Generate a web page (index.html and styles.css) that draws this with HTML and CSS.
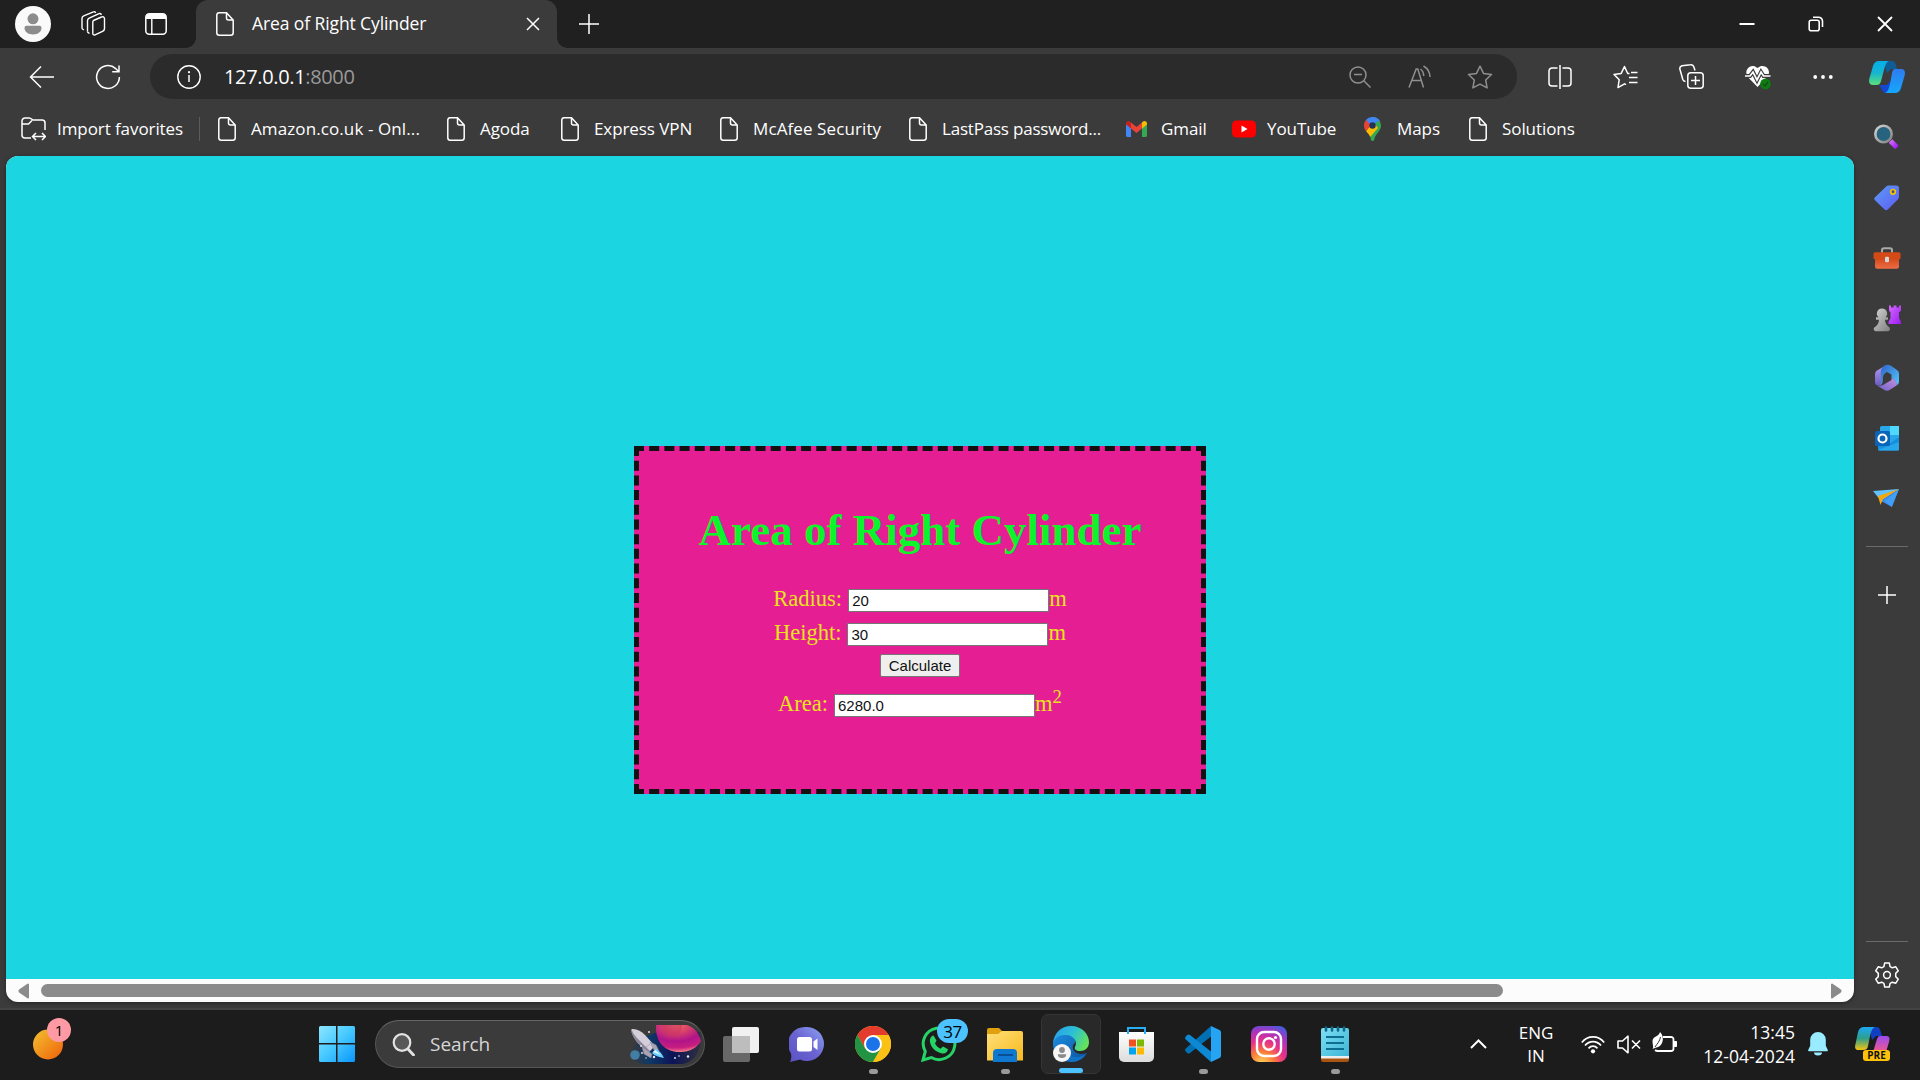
FILE: index.html
```html
<!DOCTYPE html>
<html lang="en">
<head>
<meta charset="utf-8">
<title>Area of Right Cylinder</title>
<link rel="stylesheet" href="styles.css">
</head>
<body>
<svg class="defs" aria-hidden="true">
  <defs>
    <symbol id="doc" viewBox="0 0 18 24"><path d="M3 .8h7.5L17.2 8v12.700a2.500 2.500 0 0 1-2.500 2.500H3.300a2.500 2.500 0 0 1-2.500-2.500V3.300A2.500 2.500 0 0 1 3 .8zM10.500 1v5a2 2 0 0 0 2 2h4.500" fill="none" stroke="#fff" stroke-width="1.500"/></symbol>
    <symbol id="plus" viewBox="0 0 22 22"><path d="M11 1v20M1 11h20" stroke="#fff" stroke-width="1.500"/></symbol>
    <linearGradient id="sun" x1="0" y1="0" x2="1" y2="1"><stop offset="0" stop-color="#f2c230"/><stop offset="1" stop-color="#f0600a"/></linearGradient>
    <linearGradient id="win" x1="0" y1="0" x2="1" y2="1"><stop offset="0" stop-color="#8ee5ff"/><stop offset=".5" stop-color="#45c8ff"/><stop offset="1" stop-color="#0a95fb"/></linearGradient>
    <linearGradient id="cpA" x1="0" y1="0" x2="0" y2="1"><stop offset="0" stop-color="#05aee8"/><stop offset=".5" stop-color="#16b5cf"/><stop offset="1" stop-color="#5ce07a"/></linearGradient>
    <linearGradient id="cpB" x1="0" y1="0" x2="0" y2="1"><stop offset="0" stop-color="#2f7bf0"/><stop offset="1" stop-color="#14a8fb"/></linearGradient>
    <linearGradient id="preA" x1="0" y1="0" x2="0" y2="1"><stop offset="0" stop-color="#1ba8f5"/><stop offset=".5" stop-color="#2f9f8a"/><stop offset="1" stop-color="#f5c413"/></linearGradient>
    <linearGradient id="preB" x1="0" y1="0" x2="0" y2="1"><stop offset="0" stop-color="#9a4cf0"/><stop offset="1" stop-color="#f2588a"/></linearGradient>
    <linearGradient id="violet" x1="0" y1="0" x2="1" y2="1"><stop offset="0" stop-color="#d76bff"/><stop offset="1" stop-color="#9a1cf2"/></linearGradient>
    <linearGradient id="silver" x1="0" y1="0" x2="1" y2="1"><stop offset="0" stop-color="#d4d4d4"/><stop offset="1" stop-color="#808080"/></linearGradient>
    <linearGradient id="tagG" x1="0" y1="0" x2="1" y2="1"><stop offset="0" stop-color="#5a9cf8"/><stop offset="1" stop-color="#5f5cf0"/></linearGradient>
    <linearGradient id="boxG" x1="0" y1="0" x2="0" y2="1"><stop offset="0" stop-color="#c83c0d"/><stop offset="1" stop-color="#ef6e45"/></linearGradient>
    <linearGradient id="officeL" x1="0" y1="0" x2="0" y2="1"><stop offset="0" stop-color="#b79cf0"/><stop offset="1" stop-color="#6a5cc0"/></linearGradient>
    <linearGradient id="officeR" x1="0" y1="0" x2="1" y2="1"><stop offset="0" stop-color="#2f62c8"/><stop offset="1" stop-color="#55c8fb"/></linearGradient>
    <linearGradient id="officeB" x1="0" y1="1" x2="1" y2="0"><stop offset="0" stop-color="#6f62c8"/><stop offset="1" stop-color="#c58fe0"/></linearGradient>
    <linearGradient id="chatG" x1="0" y1="1" x2="1" y2="0"><stop offset="0" stop-color="#5b52c5"/><stop offset=".5" stop-color="#6a63d0"/><stop offset="1" stop-color="#8da4f5"/></linearGradient>
    <linearGradient id="folderG" x1="0" y1="0" x2="1" y2="1"><stop offset="0" stop-color="#ffe07a"/><stop offset="1" stop-color="#f8b91b"/></linearGradient>
    <linearGradient id="edgeA" x1="0" y1=".2" x2="1" y2=".6"><stop offset="0" stop-color="#2a9fe8"/><stop offset=".5" stop-color="#2cc0d6"/><stop offset="1" stop-color="#66e356"/></linearGradient>
    <linearGradient id="edgeB" x1="0" y1="0" x2="1" y2="1"><stop offset="0" stop-color="#1a8ee0"/><stop offset="1" stop-color="#0d4f9c"/></linearGradient>
    <linearGradient id="bagG" x1="0" y1="0" x2="0" y2="1"><stop offset="0" stop-color="#fff"/><stop offset="1" stop-color="#dcdcdc"/></linearGradient>
    <radialGradient id="instaG" cx=".3" cy="1.050" r="1.150"><stop offset="0" stop-color="#ffd95a"/><stop offset=".3" stop-color="#fb7b3a"/><stop offset=".55" stop-color="#e8308a"/><stop offset=".8" stop-color="#a734c0"/><stop offset="1" stop-color="#4a5ade"/></radialGradient>
    <linearGradient id="noteG" x1="0" y1="0" x2="1" y2="1"><stop offset="0" stop-color="#7fe0f2"/><stop offset="1" stop-color="#3db5d8"/></linearGradient>
    <radialGradient id="planetG" cx=".45" cy="0" r="1"><stop offset="0" stop-color="#f2705f"/><stop offset=".3" stop-color="#d8406a"/><stop offset=".6" stop-color="#b0148a"/><stop offset=".85" stop-color="#c81f80"/><stop offset="1" stop-color="#fb7f88"/></radialGradient>
    <linearGradient id="spaceG"><stop offset="0" stop-color="#14305e" stop-opacity="0"/><stop offset=".25" stop-color="#103a66"/><stop offset=".6" stop-color="#0c1458"/><stop offset="1" stop-color="#1c1c4a" stop-opacity=".4"/></linearGradient>
  </defs>
</svg>

<header class="tabstrip">
  <div class="strip-tools">
    <svg width="36" height="36" viewBox="0 0 36 36"><circle cx="18" cy="18" r="18" fill="#fafafa"/><circle cx="18" cy="12.800" r="5.500" fill="#8c8c8c"/><path d="M11.500 19.800h13a2 2 0 0 1 2 2c0 4-3.500 6.700-8.500 6.700s-8.500-2.700-8.500-6.700a2 2 0 0 1 2-2z" fill="#8c8c8c"/></svg>
    <svg width="26" height="26" viewBox="0 0 26 26" fill="none" stroke="#fff" stroke-width="1.400" stroke-linejoin="round"><path d="M13.500 9.500l8-3.500a2 2 0 0 1 3 1.600v10a3 3 0 0 1-2 2.700l-7.500 3.500a1.500 1.500 0 0 1-2.200-1.500v-11a2 2 0 0 1 .7-1.800zM7.500 20.500V9.800a3 3 0 0 1 1.700-2.600L19 2.600M2 17V7.500a3 3 0 0 1 1.700-2.700L13.500.8"/><path d="M9.500 22.500l-1.300-.8a1.500 1.500 0 0 1-.7-1.200M3.800 18.800L2.500 18a1.500 1.500 0 0 1-.5-1M19 2.600c1.300-.5 2.200.2 2.200 1.400M13.500.8c1-.4 2 .1 2 1.200"/></svg>
    <svg width="22" height="22" viewBox="0 0 22 22"><rect x=".8" y=".8" width="20.400" height="20.400" rx="3.500" fill="none" stroke="#fff" stroke-width="1.500"/><path d="M1 6V4a3 3 0 0 1 3-3h14a3 3 0 0 1 3 3v2z" fill="#fff"/><path d="M6.800 6v15" stroke="#fff" stroke-width="1.400"/></svg>
  </div>
  <div class="tab">
    <svg width="18" height="24"><use href="#doc"/></svg>
    <span class="tab-title">Area of Right Cylinder</span>
    <svg width="14" height="14" viewBox="0 0 14 14"><path d="M1 1l12 12M13 1L1 13" stroke="#fff" stroke-width="1.500"/></svg>
  </div>
  <svg class="newtab" width="22" height="22"><use href="#plus"/></svg>
  <div class="window-controls">
    <svg width="16" height="16" viewBox="0 0 16 16"><path d="M.5 8h15" stroke="#fff" stroke-width="2"/></svg>
    <svg width="16" height="16" viewBox="0 0 16 16" fill="none" stroke="#fff" stroke-width="1.600"><rect x="1.200" y="4.200" width="10" height="10.500" rx="2"/><path d="M5 1.200h5.500a4 4 0 0 1 4 4V11"/></svg>
    <svg width="16" height="16" viewBox="0 0 16 16"><path d="M1 1l14 14M15 1L1 15" stroke="#fff" stroke-width="1.800"/></svg>
  </div>
</header>

<nav class="toolbar">
  <svg width="26" height="24" viewBox="0 0 26 24"><path d="M25 12H1.500M12 1.500L1.500 12 12 22.500" fill="none" stroke="#fff" stroke-width="1.500"/></svg>
  <svg width="26" height="26" viewBox="0 0 26 26"><path d="M24.400 13a11.400 11.400 0 1 1-3.700-8.400L23.500 7.500M24 1.500v6.300h-6.800" fill="none" stroke="#fff" stroke-width="1.500"/></svg>
  <div class="address">
    <svg width="24" height="24" viewBox="0 0 24 24"><circle cx="12" cy="12" r="11.200" fill="none" stroke="#fff" stroke-width="1.400"/><path d="M12 10v7" stroke="#fff" stroke-width="1.500"/><circle cx="12" cy="7.200" r="1.100" fill="#fff"/></svg>
    <span class="url">127.0.0.1<span class="port">:8000</span></span>
    <div class="address-tools">
      <svg width="22" height="22" viewBox="0 0 22 22" fill="none" stroke="#8f8f8f" stroke-width="1.500"><circle cx="9" cy="9" r="8"/><path d="M5 8.500h8M14.800 14.800L21.500 21.500"/></svg>
      <svg width="24" height="24" viewBox="-1 0 24 24" fill="none" stroke="#8f8f8f" stroke-width="1.500"><path d="M1 22.500L8.200 4h1.600L15.500 22.500M3.800 15.500h9.800M12.500 4c2 1.500 3.200 4 3.200 7M15.500 1c4.200 2.500 6.500 6.500 6.500 11"/></svg>
      <svg width="26" height="24" viewBox="0 0 26 24" fill="none" stroke="#8f8f8f" stroke-width="1.500" stroke-linejoin="round"><path d="M13 1.200l3.500 7.200 8 1.100-5.800 5.500 1.400 7.900L13 19.200l-7.100 3.700L7.300 15 1.500 9.500l8-1.100z"/></svg>
    </div>
  </div>
  <div class="browser-tools">
    <svg width="24" height="24" viewBox="0 0 24 24" fill="none" stroke="#fff" stroke-width="1.500"><path d="M12 0v24M9.500 3H4a3 3 0 0 0-3 3v12a3 3 0 0 0 3 3h5.500M14.500 3H20a3 3 0 0 1 3 3v12a3 3 0 0 1-3 3h-5.500"/></svg>
    <svg width="25" height="24" viewBox="0 0 25 24" fill="none" stroke="#fff" stroke-width="1.500" stroke-linejoin="round"><path d="M16.500 8.500h-1.800L11.500 1.500 8.200 8.400 1 9.400l5.200 5.300L5 22.600l6.500-3.800 1.500.8M16 12.500h8.500M18 7.500h6.500M16 17.500h8.500"/></svg>
    <svg width="25" height="25" viewBox="0 0 25 25" fill="none" stroke="#fff" stroke-width="1.500"><rect x="8.800" y="8.800" width="15.400" height="15.400" rx="3"/><path d="M16.500 12v9M12 16.500h9M6.500 17.500A3 3 0 0 1 3.800 15.500L1 5.500a3 3 0 0 1 2-3.700l8.500-1a3 3 0 0 1 3.300 2l1.200 3.700"/></svg>
    <svg width="26" height="26" viewBox="0 0 26 26"><path d="M12.500 23L2.800 13C-2 6 6-2 12.500 4 19-2 28 6 22 13z" fill="#fff"/><path d="M0 12h5l3-4 4 8 4-8 2.500 4h7" fill="none" stroke="#3b3b3b" stroke-width="4"/><path d="M0 12h5l3-4 4 8 4-8 2.500 4h7" fill="none" stroke="#fff" stroke-width="1.700"/><circle cx="20.500" cy="20" r="5.400" fill="#0e7a12"/><path d="M18 20l2 2 3-4" fill="none" stroke="#164a17" stroke-width="1.300"/></svg>
    <svg width="20" height="6" viewBox="0 0 20 6" fill="#fff"><circle cx="2.200" cy="3" r="1.900"/><circle cx="10" cy="3" r="1.900"/><circle cx="17.800" cy="3" r="1.900"/></svg>
    <svg width="36" height="32" viewBox="0 0 36 32"><path d="M14 0h9c3 0 4 3 5 8h-6l-4 4z" fill="#0f5d96"/><path d="M10 24h8l3-4 2 12h-6c-4 0-4-5-7-8z" fill="#1447d3"/><path d="M10 0h10c-3 1-4 5-5 9l-3 11c-.8 3-2 4-5 4H4c-4 0-4.500-3-3.500-7L4 5c1-3.500 3-5 6-5z" fill="url(#cpA)"/><path d="M26 8h6c4 0 4.500 3 3.500 7L32 27c-1 3.500-3 5-6 5H16c3-1 4-5 5-9l2-11c.6-3 1.500-4 3-4z" fill="url(#cpB)"/></svg>
  </div>
</nav>

<div class="bookmarks">
  <div class="bookmark import"><span class="mark"><svg width="25" height="24" viewBox="0 0 25 24" fill="none" stroke="#fff" stroke-width="1.500"><path d="M10 21H4a3 3 0 0 1-3-3V4a3 3 0 0 1 3-3h4c2.500 0 3 2 4 2h9a3 3 0 0 1 3 3v7M1 7h6.500L11 3.500M11.500 19.500h13M15 16l-3.500 3.500L15 23M21 16l3.500 3.500L21 23"/></svg></span><span>Import favorites</span></div>
  <div class="bookmark wide"><span class="mark"><svg width="18" height="24"><use href="#doc"/></svg></span><span>Amazon.co.uk - Onl...</span></div>
  <div class="bookmark"><span class="mark"><svg width="18" height="24"><use href="#doc"/></svg></span><span>Agoda</span></div>
  <div class="bookmark"><span class="mark"><svg width="18" height="24"><use href="#doc"/></svg></span><span>Express VPN</span></div>
  <div class="bookmark wide"><span class="mark"><svg width="18" height="24"><use href="#doc"/></svg></span><span>McAfee Security</span></div>
  <div class="bookmark snug"><span class="mark"><svg width="18" height="24"><use href="#doc"/></svg></span><span>LastPass password...</span></div>
  <div class="bookmark"><span class="mark brand"><svg width="21" height="16" viewBox="0 0 21 16"><path d="M0 2v12.500C0 15.300.7 16 1.500 16H5V6z" fill="#4285f4"/><path d="M21 2v12.500c0 .8-.7 1.500-1.500 1.500H16V6z" fill="#34a853"/><path d="M5 1.500v6L10.500 12 16 7.500v-6L10.500 6z" fill="#ea4335"/><path d="M0 2.500C0 .2 2.600-.7 4.300.8L5 1.500v6l-5-4z" fill="#c5221f"/><path d="M21 2.500C21 .2 18.400-.7 16.700.8l-.7.7v6l5-4z" fill="#fbbc04"/></svg></span><span>Gmail</span></div>
  <div class="bookmark"><span class="mark brand"><svg width="24" height="18" viewBox="0 0 24 18"><rect y=".5" width="24" height="17" rx="4.500" fill="#f00"/><path d="M9.500 5.500v7l6-3.500z" fill="#fff"/></svg></span><span>YouTube</span></div>
  <div class="bookmark"><span class="mark"><svg width="17" height="24" viewBox="0 0 17 24"><path d="M8.500 0A8.500 8.500 0 0 1 17 8.500c0 5.500-5 7.500-6.500 13-.4 1.800-.8 2.500-2 2.500s-1.500-.7-2-2.500z" fill="#34a853"/><path d="M2 14c1.500 2 3.200 3.500 4.200 6L14 11 9 5z" fill="#fbbc04"/><path d="M0 8.500C0 11 .9 12.600 2 14l6.500-7.500L2 3C.8 4.300 0 6.200 0 8.500z" fill="#ea4335"/><path d="M8.500 0C5.800 0 3.500 1 2 3l5 5 8.800-4.200C14.500 1.500 11.700 0 8.500 0z" fill="#4285f4"/><circle cx="8.500" cy="8.500" r="3.200" fill="#23345a"/></svg></span><span>Maps</span></div>
  <div class="bookmark"><span class="mark"><svg width="18" height="24"><use href="#doc"/></svg></span><span>Solutions</span></div>
</div>

<div class="body-row">
  <div class="viewport">
    <main class="page">
      <form class="card">
        <h1>Area of Right Cylinder</h1>
        <div class="field"><label>Radius:</label><input class="value" type="text" value="20"><span>m</span></div>
        <div class="field"><label>Height:</label><input class="value" type="text" value="30"><span>m</span></div>
        <button class="calc" type="button">Calculate</button>
        <div class="field area"><label>Area:</label><input class="value" type="text" value="6280.0"><span>m<sup>2</sup></span></div>
      </form>
    </main>
    <div class="scrollbar">
      <svg width="12" height="16" viewBox="0 0 12 16"><path d="M10 1.500v13L2 9a1.200 1.200 0 0 1 0-2z" fill="#8b8b8b" stroke="#8b8b8b" stroke-width="2" stroke-linejoin="round"/></svg>
      <div class="track"><div class="thumb"></div></div>
      <svg width="12" height="16" viewBox="0 0 12 16"><path d="M2 1.500v13L10 9a1.200 1.200 0 0 0 0-2z" fill="#8b8b8b" stroke="#8b8b8b" stroke-width="2" stroke-linejoin="round"/></svg>
    </div>
  </div>
  <aside class="sidebar">
    <div class="apps">
      <svg width="28" height="28" viewBox="0 0 28 28"><path d="M17.500 18l6.500 6.500" stroke="url(#violet)" stroke-width="5"/><circle cx="10.500" cy="11" r="8.200" fill="#27627f" stroke="url(#silver)" stroke-width="2.600"/></svg>
      <svg width="28" height="28" viewBox="0 -.8 28 28"><path d="M2 13.500L13 3c1-1 2-1.200 3-1.200h7A3 3 0 0 1 26 5v8c0 1.300-.5 2-1.200 2.800L15 25.500c-1.200 1.200-2.500 1.200-3.700 0L2 16.500c-1-1-1-2 0-3z" fill="url(#tagG)"/><circle cx="20" cy="8" r="2.300" fill="#4a4f80" stroke="#f5c400" stroke-width="1.700"/></svg>
      <svg width="28" height="28" viewBox="0 -.8 28 28"><path d="M9 9V6.500a2 2 0 0 1 2-2h6a2 2 0 0 1 2 2V9" fill="none" stroke="#aaa" stroke-width="2"/><rect x="2" y="11" width="24" height="14" rx="2.500" fill="url(#boxG)"/><rect x=".5" y="8.500" width="27" height="7" rx="1.500" fill="#d34a17"/><rect x="12" y="13" width="4" height="5.500" rx="1.200" fill="#d6d6d6"/></svg>
      <svg width="28" height="28" viewBox="0 0 28 28"><path d="M16 1.500h2v2h2.500v-2h3v2H26v-2h2V7l-2 1v6l2 4v2H15.500v-2l2-4V8L16 7z" fill="url(#violet)"/><path d="M9 4.500a5 5 0 0 1 3.500 8.700h2.500v2.500h-3c.2 3 1.200 5.300 4 7.300.8.600 1.500 2 .5 3.500-.4.600-1 .8-1.500.8H3c-.7 0-1.500-.4-1.900-1-.8-1.500-.1-2.700.9-3.300 2.800-2 3.800-4.300 4-7.300H3v-2.500h2.500A5 5 0 0 1 9 4.500z" fill="url(#silver)"/></svg>
      <svg width="28" height="28" viewBox="0 0 28 28"><path d="M14 .8L4 6.500a4 4 0 0 0-2 3.500v8c0 2 1 3 2.500 3.500 3 .8 5-1 5-4V9z" fill="url(#officeL)"/><path d="M11 2c2-1.600 5-1.400 7-.2L24 6a4 4 0 0 1 2 3.500v8c0 2-1.200 3.200-2.500 4 0-3-.7-4.500-3-6L18.500 14v-3.500L14 8c-2 1-4 2.500-4.200 6-.1 3-.3 6-2.500 7.500C9 17 7.500 13 7.800 8c.2-3 1.200-4.500 3.200-6z" fill="url(#officeR)"/><path d="M4.500 21.700c3 .8 5.500-.7 8-2.200l6-3.600V14l2 1.200c2.500 1.500 3.500 3.500 3 6.300L17 25.800c-2 1.200-4 1.200-6 0z" fill="url(#officeB)"/></svg>
      <svg width="28" height="28" viewBox="0 0 28 28"><rect x="7" y="2" width="19" height="18" rx="1.500" fill="#28a8ea"/><path d="M17 2h9v9h-9z" fill="#50d9ff"/><path d="M5 13l11 7 10-7v12a1.500 1.500 0 0 1-1.500 1.500H6.500A1.500 1.500 0 0 1 5 25z" fill="#1490df"/><path d="M5 26l21-8v7a1.500 1.500 0 0 1-1.500 1.500H6z" fill="#28a8ea"/><rect x="2" y="7" width="15" height="15" rx="1.500" fill="#0a64b8"/><circle cx="9.500" cy="14.500" r="4" fill="none" stroke="#fff" stroke-width="2.200"/></svg>
      <svg width="28" height="28" viewBox="0 0 28 28"><path d="M0 7l26-2L8 17z" fill="#62c2fb"/><path d="M26 5L8 17l11 6z" fill="#3a8ff0"/><path d="M5 12L26 5 10 15l-2.500 6z" fill="#f5a70e"/><path d="M26 5L12 17l6.500 6z" fill="#439ef5"/></svg>
    </div>
    <div class="rule"></div>
    <svg class="add" width="18" height="18" viewBox="0 0 18 18"><path d="M9 0v18M0 9h18" stroke="#fff" stroke-width="1.500"/></svg>
    <div class="rule low"></div>
    <svg class="gear" width="26" height="26" viewBox="0 0 26 26" fill="none" stroke="#fff" stroke-width="1.500" stroke-linejoin="round"><path d="M10.700 1h4.600l.8 3.600 2.200 1.200 3.500-1 2.500 4-2.600 2.600v3.200l2.600 2.600-2.500 4-3.500-1-2.200 1.200-.8 3.600h-4.600l-.8-3.600-2.200-1.200-3.500 1-2.500-4 2.600-2.600v-3.200L1.700 8.800l2.500-4 3.500 1 2.200-1.200z"/><circle cx="13" cy="13" r="3.400"/></svg>
  </aside>
</div>

<footer class="taskbar">
  <div class="widget">
    <svg width="30" height="31" viewBox="0 0 30 31"><circle cx="15" cy="15.500" r="15" fill="url(#sun)"/></svg>
    <span class="badge pink">1</span>
  </div>
  <svg class="start" width="36" height="36" viewBox="0 0 36 36" fill="url(#win)"><path d="M1.500 0H17v17H0V1.500A1.500 1.500 0 0 1 1.500 0zM18.500 0h16A1.500 1.500 0 0 1 36 1.500V17H18.500zM0 18.500h17V36H1.500A1.500 1.500 0 0 1 0 34.500zM18.500 18.500H36v16a1.500 1.500 0 0 1-1.500 1.500h-16z"/></svg>
  <div class="search">
    <svg width="23" height="23" viewBox="0 0 23 23" fill="none" stroke="#e2e2e2"><circle cx="10" cy="9.500" r="8.300" fill="#585858" stroke-width="2.200"/><path d="M16 16l5.500 6" stroke-width="2.800" stroke-linecap="round"/></svg>
    <span class="search-label">Search</span>
    <svg width="74" height="40" viewBox="0 0 74 40"><path d="M4 24C10 14 26 8 34 8h38c3 12-3 32-20 32H16C6 40 0 32 4 24z" fill="url(#spaceG)"/><path d="M28 1h31c7 2 12 8 14 16-4 7-12 11.500-22 11C38 28 27 19 28 1z" fill="url(#planetG)"/><path d="M34 1h20c0 6-3 11-9 12S34 8 34 1z" fill="#c83264" opacity=".5"/><circle cx="7" cy="31" r="4.800" fill="#427da4"/><path d="M3.500 5C9 4.500 13 7 17 11l10 11-7 7L9 18C6 14 3 9 3.500 5z" fill="#d3ced9"/><path d="M3.500 5C5 10 8 13 11 16l11 11-2 2L9 18C6 14 3 9 3.500 5z" fill="#8c8498"/><path d="M17 24l5-4M14 23l2 7 7 4 1-4zM22 18l6 3 3 6-5-1z" fill="#aaa3b4" stroke="#8c8498" stroke-width=".5"/><path d="M24 29l4-4c4 2 6 5 8 9-5-1-9-2-12-5z" fill="#6fd0ff"/><path d="M25 28l2-2 6 5z" fill="#e6f8ff"/><g fill="#e9e9f5"><circle cx="21" cy="8" r="1"/><circle cx="13" cy="22" r=".9"/><circle cx="14" cy="29" r=".9"/><circle cx="26" cy="33" r="1.200"/><circle cx="18" cy="34" r=".7"/><circle cx="47" cy="34" r=".9"/><circle cx="60" cy="32.500" r="1.200"/><circle cx="51" cy="32" r=".8"/></g></svg>
  </div>
  <div class="pins">
    <div class="pin"><svg width="36" height="36" viewBox="0 0 36 36"><rect x="9" y="1" width="27" height="26" rx="2" fill="#f1f1f1"/><rect x="0" y="10" width="27" height="26" rx="2" fill="#686868"/><path d="M9 10h18v17H9z" fill="#bdbdbd"/></svg></div>
    <div class="pin"><svg width="36" height="36" viewBox="0 0 36 36"><path d="M18 1a17 17 0 1 1-7 32.500L1 36c1.500-3 1.500-6 1-8.500A17 17 0 0 1 18 1z" fill="url(#chatG)"/><rect x="8" y="11" width="15" height="14.500" rx="2.500" fill="#fff"/><path d="M24.500 15.500l4-3v11.500l-4-3z" fill="#fff"/></svg></div>
    <div class="pin"><svg width="36" height="36" viewBox="0 0 36 36"><circle cx="18" cy="18" r="18" fill="#fbc116"/><path d="M18 9h15.600A18 18 0 0 0 2.400 9l7.800 13.500z" fill="#e33b2e"/><path d="M2.400 9A18 18 0 0 0 18 36l7.800-13.500H10.200z" fill="#229342"/><path d="M18 9h15.600A18 18 0 0 1 18 36l7.800-13.500z" fill="#fbc116"/><circle cx="18" cy="18" r="9" fill="#fff"/><circle cx="18" cy="18" r="7" fill="#1a73e8"/></svg><i class="dot"></i></div>
    <div class="pin"><svg width="36" height="36" viewBox="0 0 36 36"><path d="M2 34l2.300-8.500A15.800 15.800 0 1 1 10.300 31.500z" fill="none" stroke="#25d366" stroke-width="3"/><path d="M12.500 9.500l3 5-1.500 3c1.500 2.800 3 4 5.500 5.200l2.500-2.200 5 2.700c-.5 3-3 4.800-6 4.300-6.500-1.500-11-6-12-11.500-.5-3 1-6 3.500-6.500z" fill="#25d366"/></svg><span class="badge blue">37</span></div>
    <div class="pin"><svg width="36" height="36" viewBox="0 0 36 36"><path d="M2 2h10l4 4-4 4H0V4a2 2 0 0 1 2-2z" fill="#e0a010"/><path d="M0 8h11l4-3h19a2 2 0 0 1 2 2v27.500H0z" fill="url(#folderG)"/><path d="M6 36v-9a4 4 0 0 1 4-4h16a4 4 0 0 1 4 4v9z" fill="#0f78d0"/><path d="M11 29h15" stroke="#0a4f96" stroke-width="2"/></svg><i class="dot"></i></div>
    <div class="pin current"><svg width="36" height="36" viewBox="0 0 36 36"><path d="M0 18C0 11 6 8 12 8c7 0 11 4 10 9-4 2-3 10 5 11 3 .3 5-.5 7-1-3 6-9 9-16 9C7 36 0 28 0 18z" fill="url(#edgeB)"/><path d="M13 18c-2 7 4 14 12 13 4-.5 7-2 8-4-3 6-9 9-15 9C9 34 8 24 13 18z" fill="#1272c4"/><path d="M0 17C1 7 8 0 18 0c11 0 18 8 18 16 0 6-4 9-9 9-4 0-6-2-5-4 3-5-1-11-8-12C7 8.500 2 11 0 17z" fill="url(#edgeA)"/><circle cx="9" cy="27" r="9" fill="#f6f6f6"/><circle cx="9" cy="24" r="2.900" fill="#8a8a8a"/><path d="M4.800 28.300h8.400c0 3-2 3.700-4.200 3.700s-4.200-.7-4.200-3.700z" fill="#8a8a8a"/></svg><i class="dot"></i></div>
    <div class="pin"><svg width="36" height="36" viewBox="0 0 36 36"><path d="M0 6h35v25a5 5 0 0 1-5 5H5a5 5 0 0 1-5-5z" fill="url(#bagG)"/><path d="M9 8V2h17v6" fill="none" stroke="#26aef0" stroke-width="2"/><path d="M10 13.500h7v7h-7z" fill="#f25022"/><path d="M18 13.500h7v7h-7z" fill="#7fba00"/><path d="M10 21.500h7v7h-7z" fill="#00a4ef"/><path d="M18 21.500h7v7h-7z" fill="#ffb900"/></svg></div>
    <div class="pin"><svg width="36" height="36" viewBox="0 0 36 36"><path d="M2.200 27L.6 25.200c-.8-.9-.8-2 .2-2.800L26 0v10.500L5 27c-1 .8-2 .8-2.800 0z" fill="#0070b5"/><path d="M2.200 9L.6 10.800c-.8.900-.8 2 .2 2.800L26 36V25.500L5 9c-1-.8-2-.8-2.800 0z" fill="#0e88d3"/><path d="M26 0l8.500 4A2.500 2.500 0 0 1 36 6v24a2.500 2.500 0 0 1-1.500 2L26 36z" fill="#26a3f2"/></svg><i class="dot"></i></div>
    <div class="pin"><svg width="36" height="36" viewBox="0 0 36 36"><rect width="36" height="36" rx="8" fill="url(#instaG)"/><g fill="none" stroke="#fff" stroke-width="2.400"><rect x="6" y="6" width="24" height="24" rx="7"/><circle cx="18" cy="18" r="5.700"/></g><circle cx="24.500" cy="11.500" r="1.600" fill="#fff"/></svg></div>
    <div class="pin"><svg width="28" height="36" viewBox="0 0 28 36"><rect y="27" width="28" height="9" rx="2" fill="#a9540f"/><rect y="25" width="28" height="7.500" fill="#eee"/><path d="M0 4a2 2 0 0 1 2-2h24a2 2 0 0 1 2 2v26H0z" fill="url(#noteG)"/><path d="M5 1.500v3M11 1.500v3M17 1.500v3M23 1.500v3" stroke="#0e6a88" stroke-width="2.600" stroke-linecap="round"/><path d="M5 11h18M5 17h18M5 23h18" stroke="#0c6e90" stroke-width="2"/></svg><i class="dot"></i></div>
  </div>
  <div class="tray">
    <svg width="17" height="10" viewBox="0 0 17 10"><path d="M1 9l7.500-7.500L16 9" fill="none" stroke="#fff" stroke-width="2"/></svg>
    <div class="lang"><span>ENG</span><span>IN</span></div>
    <div class="status">
      <svg width="24" height="19" viewBox="0 0 24 19" fill="none" stroke="#fff" stroke-width="1.700"><path d="M.8 7.500c6-7.500 16.400-7.500 22.400 0M4 10.500c4.500-5.200 11.500-5.200 16 0M7.500 13.300c2.600-2.800 6.400-2.800 9 0"/><circle cx="12" cy="16.300" r="2.100" fill="#fff" stroke="none"/></svg>
      <svg width="24" height="19" viewBox="0 0 24 19" fill="none" stroke="#fff" stroke-width="1.600" stroke-linejoin="round"><path d="M1 6h4.500L11 1.200v16.600L5.500 13H1zM15 5.500l8 8M23 5.500l-8 8"/></svg>
      <svg class="battery" width="25" height="21" viewBox="0 0 25 21"><path d="M11 5h8a2.500 2.500 0 0 1 2.500 2.500v9A2.500 2.500 0 0 1 19 19H6a4 4 0 0 1-3-1" fill="none" stroke="#fff" stroke-width="1.800"/><path d="M22.500 9.500h2v5h-2z" fill="#fff" stroke="#fff"/><path d="M8 0c3 3 4 8 1.500 12C7 16 4 15 .5 17 2 15 .5 13 .5 9 .5 4 7 5 8 0z" fill="#fff"/><path d="M8.500 5C8 9 5 12 3 15" stroke="#333" fill="none"/></svg>
    </div>
    <div class="clock"><span>13:45</span><span>12-04-2024</span></div>
    <svg class="bell" width="20" height="24" viewBox="0 0 20 24" fill="#99ebff"><path d="M10 0a7.800 7.800 0 0 1 7.800 7.800v6l2 4.200c.3.800 0 1.200-.8 1.200H1c-.8 0-1.100-.4-.8-1.200l2-4.200v-6A7.800 7.800 0 0 1 10 0zM6 20.500h8a4 3 0 0 1-8 0z"/></svg>
    <div class="preview">
      <svg width="35" height="34" viewBox="0 0 35 34"><path d="M14 0h8c3 0 3.500 4 5 9h-6l-4 4z" fill="#123ec2"/><path d="M9 0h11c-3 1-4 5-5 9l-2 10c-.6 3-2 4-5 4H4c-4 0-4.500-2-3.500-6L3 5c1-3.500 3-5 6-5z" fill="url(#preA)"/><path d="M25 9h6c3.500 0 4 2 3 6l-3 10H18l4-13c.8-2 1.500-3 3-3z" fill="url(#preB)"/></svg>
      <span class="pre">PRE</span>
    </div>
  </div>
</footer>
</body>
</html>
```
FILE: styles.css
```css
* { box-sizing: border-box; }
body {
  margin: 0;
  width: 1920px;
  height: 1080px;
  overflow: hidden;
  display: flex;
  flex-direction: column;
  background: #3b3b3b;
  color: #fff;
  font-family: "Open Sans", "Noto Sans", sans-serif;
  font-size: 17px;
}
svg { display: block; flex: none; }
.defs { position: absolute; width: 0; height: 0; }

/* Tab strip */
.tabstrip {
  height: 48px;
  flex: none;
  display: flex;
  align-items: center;
  background: #202020;
}
.strip-tools {
  width: 196px;
  padding-left: 15px;
  display: flex;
  align-items: center;
  gap: 29px;
}
.strip-tools svg:last-child { margin-left: 10px; }
.tab {
  position: relative;
  width: 361px;
  height: 48px;
  padding: 0 17px 0 20px;
  display: flex;
  align-items: center;
  background: #3b3b3b;
  border-radius: 12px 12px 0 0;
}
.tab::before, .tab::after {
  content: "";
  position: absolute;
  bottom: 0;
  width: 10px;
  height: 10px;
}
.tab::before { left: -10px; background: radial-gradient(circle at 0 0, transparent 9.500px, #3b3b3b 10px); }
.tab::after { right: -10px; background: radial-gradient(circle at 100% 0, transparent 9.500px, #3b3b3b 10px); }
.tab-title {
  flex: 1;
  margin-left: 18px;
  padding-bottom: 2px;
  font-size: 17.500px;
  letter-spacing: -0.100px;
  white-space: nowrap;
}
.newtab { margin-left: 21px; }
.window-controls {
  margin-left: auto;
  padding-right: 27px;
  display: flex;
  gap: 53px;
}

/* Navigation toolbar */
.toolbar {
  height: 57px;
  flex: none;
  display: flex;
  align-items: center;
  padding: 0 15px 0 29px;
}
.toolbar > svg:nth-child(2) { margin-left: 40px; }
.address {
  width: 1367px;
  height: 45px;
  flex: none;
  margin-left: 29px;
  padding: 0 24px 0 27px;
  display: flex;
  align-items: center;
  border-radius: 23px;
  background: #2b2b2b;
}
.url { margin-left: 23px; padding-bottom: 1px; font-size: 20px; letter-spacing: -0.350px; }
.port { color: #9a9a9a; }
.address-tools { margin-left: auto; display: flex; align-items: center; gap: 36px; }
.browser-tools {
  margin-left: 31px;
  display: flex;
  align-items: center;
  gap: 41px;
}
.browser-tools svg:nth-child(5) { margin-left: 1px; }
.browser-tools svg:last-child { margin-left: -5px; }

/* Favorites bar */
.bookmarks {
  height: 51px;
  flex: none;
  padding: 0 0 4px 21px;
  display: grid;
  grid-template-columns: 197px 229px 114px 159px 189px 219px 106px 130px 105px 120px;
  align-items: center;
  letter-spacing: -0.080px;
}
.bookmark { display: flex; align-items: center; white-space: nowrap; }
.wide { letter-spacing: 0.100px; }
.snug { letter-spacing: -0.200px; }
.mark { width: 33px; flex: none; }
.brand svg { margin-left: -2px; }
.import { width: 179px; border-right: 1px solid #5c5c5c; }
.import .mark { width: 36px; }

/* Page area */
.body-row { height: 854px; flex: none; display: flex; border-bottom: 2px solid #434343; }
.viewport {
  width: 1848px;
  height: 846px;
  margin-left: 6px;
  display: flex;
  flex-direction: column;
  border-radius: 12px;
  overflow: hidden;
  background: #fcfcfc;
  box-shadow: 0 1px 4px rgba(0, 0, 0, .4);
}
.page {
  height: 823px;
  padding: 290px 20px 0 0;
  background: #1bd6e0;
  display: flex;
  justify-content: center;
  align-items: flex-start;
}
.card {
  width: 572px;
  height: 348px;
  border: 5px dashed #111;
  background: #e51f93;
  color: #e9e41b;
  display: flex;
  flex-direction: column;
  align-items: center;
  font-family: "Liberation Serif", serif;
  font-size: 22.500px;
}
.card h1 {
  margin: 54px 0 27px;
  font-size: 45px;
  line-height: 50px;
  color: #0bf52a;
  white-space: nowrap;
}
.field { height: 34px; display: flex; align-items: center; line-height: 26px; }
.field label { margin-right: 6px; }
.field .value { transform: translateY(1px); }
.value {
  width: 201px;
  height: 23px;
  padding: 1px 3px;
  border: 1px solid #767676;
  background: #fff;
  color: #111;
  font-family: "Liberation Sans", sans-serif;
  font-size: 15px;
}
.calc {
  width: 80px;
  height: 23px;
  margin-top: 4px;
  padding: 0;
  border: 1px solid #767676;
  border-radius: 2px;
  background: #efefef;
  color: #111;
  font-family: "Liberation Sans", sans-serif;
  font-size: 15px;
}
.area { margin-top: 10px; }
.area sup { font-size: 18.750px; line-height: 0; }

.scrollbar { height: 23px; padding: 0 12px; display: flex; align-items: center; }
.track { flex: 1; margin: 0 11px 0 11px; }
.thumb { width: 1462px; height: 13px; border-radius: 7px; background: #8b8b8b; }

/* Sidebar */
.sidebar {
  width: 66px;
  display: flex;
  flex-direction: column;
  align-items: center;
}
.apps { margin-top: -33px; display: flex; flex-direction: column; gap: 32.200px; }
.rule { width: 42px; height: 1px; margin-top: 34px; background: #6b6b6b; }
.add { margin-top: 39px; }
.low { margin-top: 337px; }
.gear { margin-top: 20px; }

/* Taskbar */
.taskbar {
  flex: 1;
  padding-bottom: 2px;
  display: flex;
  align-items: center;
  background: #1c1c1c;
}
.widget { position: relative; margin-left: 33px; }
.badge {
  position: absolute;
  display: grid;
  place-items: center;
  height: 24px;
  border-radius: 12px;
  color: #000;
  font-size: 15px;
}
.pink { width: 24px; left: 14px; top: -11px; background: #ff9aa4; }
.blue { width: 31px; height: 32px; border-radius: 16px; left: 28px; top: 5px; height: 24px; background: #4cc2ff; font-size: 17px; letter-spacing: -0.500px; }
.start { margin-left: 256px; }
.search {
  width: 330px;
  height: 48px;
  margin-left: 20px;
  padding: 0 2px 0 16px;
  display: flex;
  align-items: center;
  border: 1px solid #555;
  border-top-color: #666;
  border-radius: 24px;
  background: #3b3b3b;
}
.search-label { flex: 1; margin-left: 15px; font-size: 19px; color: #d6d6d6; }
.pins { margin-left: 6px; display: flex; gap: 6px; }
.pin {
  position: relative;
  width: 60px;
  height: 60px;
  display: flex;
  align-items: center;
  justify-content: center;
}
.current { border: 1px solid #353535; border-radius: 7px; background: #292929; }
.dot {
  position: absolute;
  bottom: 0;
  left: 26px;
  width: 9px;
  height: 5px;
  border-radius: 3px;
  background: #9a9a9a;
}
.current .dot { left: 17px; width: 24px; background: #4cc2ff; }
.tray {
  margin-left: auto;
  padding-right: 30px;
  display: flex;
  align-items: center;
}
.lang {
  width: 48px;
  margin-left: 25px;
  display: flex;
  flex-direction: column;
  align-items: center;
  font-size: 17px;
  line-height: 23px;
}
.status { display: flex; align-items: center; gap: 12px; margin-left: 21px; }
.battery { margin-top: -3px; margin-left: -1px; }
.clock {
  width: 104px;
  margin-left: 14px;
  display: flex;
  flex-direction: column;
  align-items: flex-end;
  font-size: 17.500px;
  letter-spacing: 0.050px;
  line-height: 24px;
  white-space: nowrap;
}
.bell { margin-left: 13px; }
.preview { position: relative; margin-left: 27px; }
.pre {
  position: absolute;
  left: 8px;
  bottom: 0;
  width: 27px;
  height: 11px;
  border-radius: 3px;
  background: #ffc20a;
  color: #111;
  font-size: 10px;
  font-weight: 700;
  line-height: 11px;
  text-align: center;
}
```
